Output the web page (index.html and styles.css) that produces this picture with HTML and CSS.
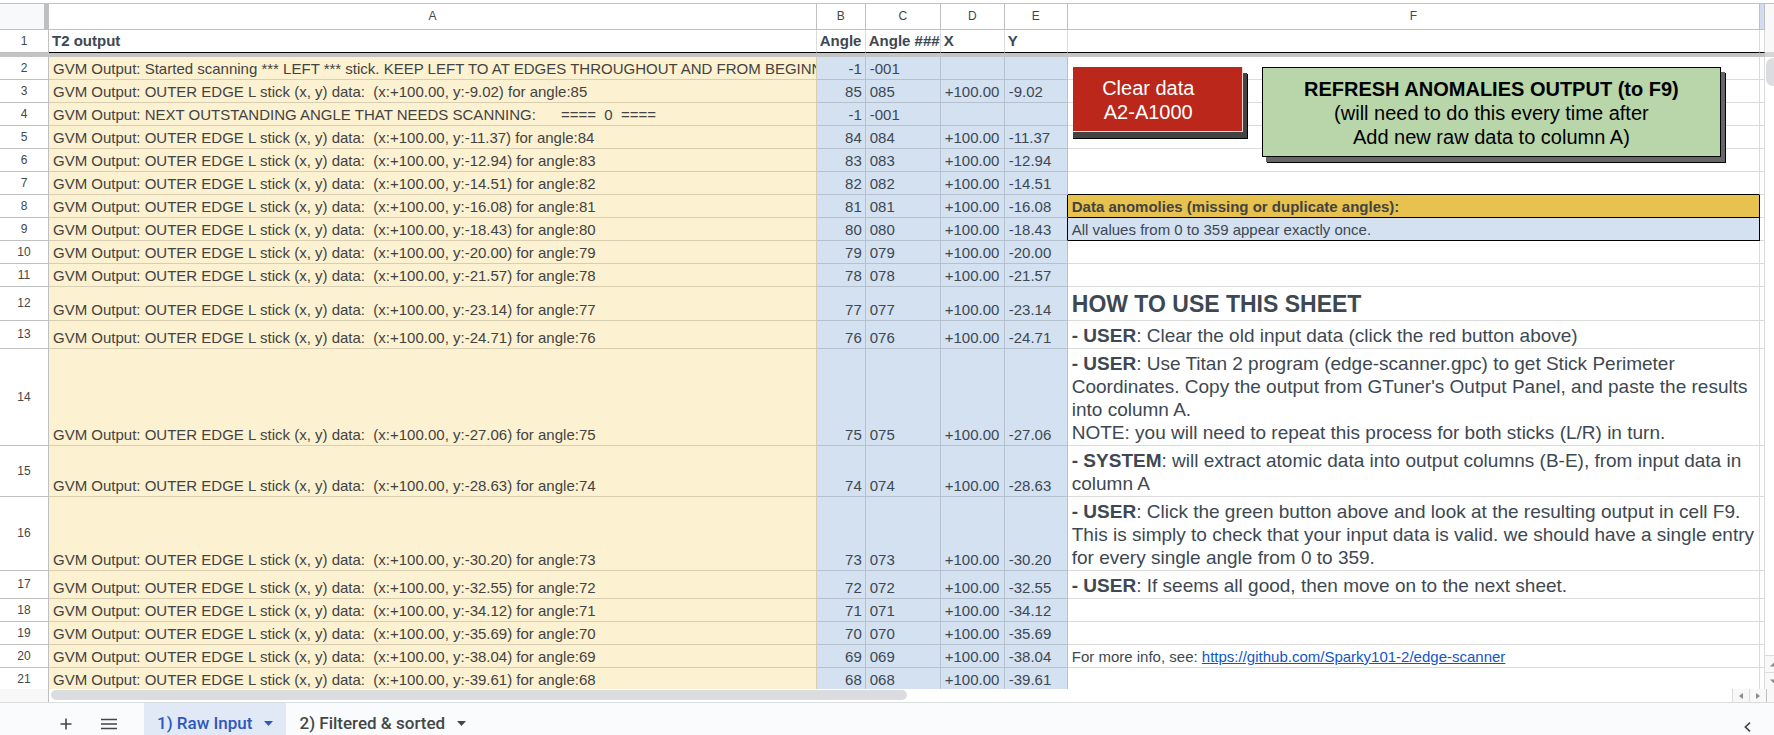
FILE: index.html
```html
<!DOCTYPE html>
<html lang="en">
<head>
<meta charset="utf-8">
<title>Edge scanner</title>
<link rel="stylesheet" href="styles.css">
</head>
<body>
<main class="sheet">
  <div class="viewport">
    <table class="grid">
      <colgroup>
        <col class="col-num"><col class="col-a"><col class="col-b"><col class="col-c"><col class="col-d"><col class="col-e"><col class="col-f"><col class="col-g">
      </colgroup>
      <thead>
        <tr class="letters"><td class="corner"></td><th>A</th><th>B</th><th>C</th><th>D</th><th>E</th><th>F</th><th class="selected"></th></tr>
        <tr class="titles"><th scope="row" class="num">1</th><th>T2 output</th><th>Angle</th><th>Angle ###</th><th>X</th><th>Y</th><th></th><th></th></tr>
        <tr class="freeze"><td colspan="8"></td></tr>
      </thead>
      <tbody>
        <tr><th scope="row">2</th><td class="raw">GVM Output: Started scanning *** LEFT *** stick. KEEP LEFT TO AT EDGES THROUGHOUT AND FROM BEGINNING</td><td class="out right">-1</td><td class="out">-001</td><td class="out"></td><td class="out"></td><td class="anchor"><div class="drawings"><button class="clear" type="button">Clear data<br>A2-A1000</button><button class="refresh" type="button"><b>REFRESH ANOMALIES OUTPUT (to F9)</b><br>(will need to do this every time after<br>Add new raw data to column A)</button></div></td><td></td></tr>
        <tr><th scope="row">3</th><td class="raw">GVM Output: OUTER EDGE L stick (x, y) data:  (x:+100.00, y:-9.02) for angle:85</td><td class="out right">85</td><td class="out">085</td><td class="out">+100.00</td><td class="out">-9.02</td><td></td><td></td></tr>
        <tr><th scope="row">4</th><td class="raw">GVM Output: NEXT OUTSTANDING ANGLE THAT NEEDS SCANNING:      ====  0  ====</td><td class="out right">-1</td><td class="out">-001</td><td class="out"></td><td class="out"></td><td></td><td></td></tr>
        <tr><th scope="row">5</th><td class="raw">GVM Output: OUTER EDGE L stick (x, y) data:  (x:+100.00, y:-11.37) for angle:84</td><td class="out right">84</td><td class="out">084</td><td class="out">+100.00</td><td class="out">-11.37</td><td></td><td></td></tr>
        <tr><th scope="row">6</th><td class="raw">GVM Output: OUTER EDGE L stick (x, y) data:  (x:+100.00, y:-12.94) for angle:83</td><td class="out right">83</td><td class="out">083</td><td class="out">+100.00</td><td class="out">-12.94</td><td></td><td></td></tr>
        <tr><th scope="row">7</th><td class="raw">GVM Output: OUTER EDGE L stick (x, y) data:  (x:+100.00, y:-14.51) for angle:82</td><td class="out right">82</td><td class="out">082</td><td class="out">+100.00</td><td class="out">-14.51</td><td class="over"></td><td></td></tr>
        <tr><th scope="row">8</th><td class="raw">GVM Output: OUTER EDGE L stick (x, y) data:  (x:+100.00, y:-16.08) for angle:81</td><td class="out right">81</td><td class="out">081</td><td class="out">+100.00</td><td class="out beside">-16.08</td><td class="boxed gold">Data anomolies (missing or duplicate angles):</td><td></td></tr>
        <tr><th scope="row">9</th><td class="raw">GVM Output: OUTER EDGE L stick (x, y) data:  (x:+100.00, y:-18.43) for angle:80</td><td class="out right">80</td><td class="out">080</td><td class="out">+100.00</td><td class="out beside">-18.43</td><td class="boxed out">All values from 0 to 359 appear exactly once.</td><td></td></tr>
        <tr><th scope="row">10</th><td class="raw">GVM Output: OUTER EDGE L stick (x, y) data:  (x:+100.00, y:-20.00) for angle:79</td><td class="out right">79</td><td class="out">079</td><td class="out">+100.00</td><td class="out">-20.00</td><td></td><td></td></tr>
        <tr><th scope="row">11</th><td class="raw">GVM Output: OUTER EDGE L stick (x, y) data:  (x:+100.00, y:-21.57) for angle:78</td><td class="out right">78</td><td class="out">078</td><td class="out">+100.00</td><td class="out">-21.57</td><td></td><td></td></tr>
        <tr><th scope="row">12</th><td class="raw">GVM Output: OUTER EDGE L stick (x, y) data:  (x:+100.00, y:-23.14) for angle:77</td><td class="out right">77</td><td class="out">077</td><td class="out">+100.00</td><td class="out">-23.14</td><td class="heading">HOW TO USE THIS SHEET</td><td></td></tr>
        <tr><th scope="row">13</th><td class="raw">GVM Output: OUTER EDGE L stick (x, y) data:  (x:+100.00, y:-24.71) for angle:76</td><td class="out right">76</td><td class="out">076</td><td class="out">+100.00</td><td class="out">-24.71</td><td class="note"><b>- USER</b>: Clear the old input data (click the red button above)</td><td></td></tr>
        <tr><th scope="row">14</th><td class="raw">GVM Output: OUTER EDGE L stick (x, y) data:  (x:+100.00, y:-27.06) for angle:75</td><td class="out right">75</td><td class="out">075</td><td class="out">+100.00</td><td class="out">-27.06</td><td class="note"><b>- USER</b>: Use Titan 2 program (edge-scanner.gpc) to get Stick Perimeter Coordinates. Copy the output from GTuner's Output Panel, and paste the results into column A.<br>NOTE: you will need to repeat this process for both sticks (L/R) in turn.</td><td></td></tr>
        <tr><th scope="row">15</th><td class="raw">GVM Output: OUTER EDGE L stick (x, y) data:  (x:+100.00, y:-28.63) for angle:74</td><td class="out right">74</td><td class="out">074</td><td class="out">+100.00</td><td class="out">-28.63</td><td class="note"><b>- SYSTEM</b>: will extract atomic data into output columns (B-E), from input data in column A</td><td></td></tr>
        <tr><th scope="row">16</th><td class="raw">GVM Output: OUTER EDGE L stick (x, y) data:  (x:+100.00, y:-30.20) for angle:73</td><td class="out right">73</td><td class="out">073</td><td class="out">+100.00</td><td class="out">-30.20</td><td class="note"><b>- USER</b>: Click the green button above and look at the resulting output in cell F9. This is simply to check that your input data is valid. we should have a single entry for every single angle from 0 to 359.</td><td></td></tr>
        <tr><th scope="row">17</th><td class="raw">GVM Output: OUTER EDGE L stick (x, y) data:  (x:+100.00, y:-32.55) for angle:72</td><td class="out right">72</td><td class="out">072</td><td class="out">+100.00</td><td class="out">-32.55</td><td class="note"><b>- USER</b>: If seems all good, then move on to the next sheet.</td><td></td></tr>
        <tr><th scope="row">18</th><td class="raw">GVM Output: OUTER EDGE L stick (x, y) data:  (x:+100.00, y:-34.12) for angle:71</td><td class="out right">71</td><td class="out">071</td><td class="out">+100.00</td><td class="out">-34.12</td><td></td><td></td></tr>
        <tr><th scope="row">19</th><td class="raw">GVM Output: OUTER EDGE L stick (x, y) data:  (x:+100.00, y:-35.69) for angle:70</td><td class="out right">70</td><td class="out">070</td><td class="out">+100.00</td><td class="out">-35.69</td><td></td><td></td></tr>
        <tr><th scope="row">20</th><td class="raw">GVM Output: OUTER EDGE L stick (x, y) data:  (x:+100.00, y:-38.04) for angle:69</td><td class="out right">69</td><td class="out">069</td><td class="out">+100.00</td><td class="out">-38.04</td><td>For more info, see: <a href="https://github.com/Sparky101-2/edge-scanner">https://github.com/Sparky101-2/edge-scanner</a></td><td></td></tr>
        <tr><th scope="row">21</th><td class="raw">GVM Output: OUTER EDGE L stick (x, y) data:  (x:+100.00, y:-39.61) for angle:68</td><td class="out right">68</td><td class="out">068</td><td class="out">+100.00</td><td class="out">-39.61</td><td></td><td></td></tr>
      </tbody>
    </table>
    <div class="vscroll">
      <div class="vhead"></div>
      <div class="vtrack"><div class="vthumb"></div></div>
      <button class="step" type="button" aria-label="Scroll up"><svg width="8" height="5" viewBox="0 0 8 5"><path d="M0 4.500L4 .5l4 4z"/></svg></button>
      <button class="step" type="button" aria-label="Scroll down"><svg width="8" height="5" viewBox="0 0 8 5"><path d="M0 .5h8l-4 4z"/></svg></button>
    </div>
  </div>
  <div class="hscroll">
    <div class="hhead"></div>
    <div class="htrack"><div class="hthumb"></div></div>
    <button class="hstep" type="button" aria-label="Scroll left"><svg width="4" height="6" viewBox="0 0 4 6"><path d="M4 0v6L0 3z"/></svg></button>
    <button class="hstep" type="button" aria-label="Scroll right"><svg width="4" height="6" viewBox="0 0 4 6"><path d="M0 0v6l4-3z"/></svg></button>
    <div class="hcorner"></div>
  </div>
</main>
<nav class="tabs" aria-label="Sheets">
  <button class="icon" type="button" aria-label="Add sheet"><svg width="12" height="12" viewBox="0 0 12 12"><path d="M6 .5v11M.5 6h11" fill="none" stroke="#444746" stroke-width="1.600"/></svg></button>
  <button class="icon" type="button" aria-label="All sheets"><svg width="16" height="12" viewBox="0 0 16 12"><path d="M0 1.500h16M0 6h16M0 10.500h16" fill="none" stroke="#444746" stroke-width="1.600"/></svg></button>
  <button class="tab active" type="button">1) Raw Input<svg width="9" height="5" viewBox="0 0 9 5"><path d="M0 0h9L4.500 5z"/></svg></button>
  <button class="tab" type="button">2) Filtered &amp; sorted<svg width="9" height="5" viewBox="0 0 9 5"><path d="M0 0h9L4.500 5z"/></svg></button>
  <button class="explore" type="button" aria-label="Show side panel"><svg width="7" height="10" viewBox="0 0 7 10"><path d="M6 .7L1.400 5 6 9.300" fill="none" stroke="#444746" stroke-width="1.700"/></svg></button>
</nav>
</body>
</html>
```

FILE: styles.css
```css
* { box-sizing: border-box; }

body {
  margin: 0;
  height: 100vh;
  display: flex;
  flex-direction: column;
  overflow: hidden;
  background: #fff;
  color: #3d4852;
  font: 15px/18px "Liberation Sans", Arial, sans-serif;
}

button {
  margin: 0;
  padding: 0;
  border: 0;
  background: none;
  font: inherit;
  color: inherit;
}

.sheet {
  flex: 1;
  min-height: 0;
  display: flex;
  flex-direction: column;
  padding-top: 3px;
}

.viewport {
  flex: 1;
  min-height: 0;
  display: flex;
  overflow: hidden;
  border-top: 1px solid #c0c0c0;
}

/* Grid */
.grid {
  flex: 1;
  min-width: 0;
  width: 100%;
  align-self: flex-start;
  table-layout: fixed;
  border-collapse: separate;
  border-spacing: 0;
}

.col-num { width: 49px; }
.col-a { width: 43.5%; }
.col-b { width: 49px; }
.col-c { width: 75px; }
.col-d { width: 64px; }
.col-e { width: 63px; }
.col-g { width: 5px; }

.grid td,
.grid th {
  height: 23px;
  padding: 2px 3px;
  border: solid rgba(0, 0, 0, 0.14);
  border-width: 0 1px 1px 0;
  overflow: hidden;
  text-align: left;
  vertical-align: bottom;
  white-space: pre;
}

.grid tbody td { padding: 3px 3px 1px 4px; }

.grid tbody th,
.grid .titles .num {
  padding: 0 0 1px;
  border-color: #c0c0c0;
  text-align: center;
  vertical-align: middle;
  color: #444746;
  font-size: 12px;
  font-weight: normal;
}

.grid .letters th,
.grid .letters td {
  height: 26px;
  padding: 0 0 2px;
  border-color: #c0c0c0;
  text-align: center;
  vertical-align: middle;
  color: #444746;
  font-size: 12px;
  font-weight: normal;
}

.grid .letters .corner {
  background: #f8f9fa;
  border-right: 5px solid #c0c0c0;
}

.grid .letters .selected { background: #d3ddf2; }

.grid .titles th { border-bottom-color: #000; }
.grid .titles .num { border-bottom-color: #c0c0c0; }

.grid .freeze td {
  height: 4px;
  padding: 0;
  border: 0;
  background: #c4c4c4;
}

.grid .raw { background: #fcf1d0; color: #434343; }
.grid .out { background: #d3e1f1; }
.grid .right { text-align: right; }
.grid .over { border-bottom-color: #000; }
.grid .beside { border-right-color: #000; }
.grid .boxed { border-color: #000; }
.grid .gold { background: #e8c24f; color: #434343; font-weight: bold; }

.grid tbody .heading {
  font-size: 23px;
  line-height: 29px;
  font-weight: bold;
}

.grid tbody .note {
  font-size: 19px;
  line-height: 23px;
  white-space: normal;
}

.grid a { color: #1155cc; }

/* Drawings that float over the cells */
.grid tbody .anchor {
  position: relative;
  overflow: visible;
}

.drawings {
  position: absolute;
  top: 10px;
  left: 5px;
  right: 38px;
  z-index: 1;
  display: flex;
  align-items: flex-start;
  gap: 19px;
  color: #000;
  font-size: 20px;
  line-height: 24px;
  text-align: center;
}

.clear {
  flex: none;
  width: 170px;
  padding: 9px 18px 7px 0;
  border: solid #f4d6d2;
  border-width: 0 1px 1px 0;
  background: #bb271a;
  box-shadow: 0 6px 0 #434343, 4px 6px 0 #434343, 0 7px 0 #000, 5px 7px 0 #000;
  color: #fff;
}

.refresh {
  flex: 1;
  padding: 9px 0 7px;
  border: 1px solid #000;
  background: #b9d5aa;
  box-shadow: 4px 5px 0 #666, 5px 6px 0 #000;
}

/* Scrollbars */
.vscroll {
  flex: none;
  display: flex;
  flex-direction: column;
  width: 17px;
  margin-right: -8px;
}

.vhead {
  height: 53px;
  border-bottom: 5px solid #d5d5d5;
  background: #f8f8f8;
}

.vtrack { flex: 1; padding: 1px; }

.vthumb {
  height: 28px;
  border-radius: 7px;
  background: #dadce0;
}

.step,
.hstep {
  display: flex;
  align-items: center;
  justify-content: center;
  background: #f8f8f8;
  fill: #8a8a8a;
}

.step { height: 17px; border-top: 1px solid #dcdcdc; }

.hscroll {
  flex: none;
  display: flex;
  height: 13px;
}

.hhead {
  width: 49px;
  background: #f8f8f8;
  border-right: 1px solid #c0c0c0;
}

.htrack { flex: 1; padding: 1px 2px 2px; }

.hthumb {
  width: 51%;
  height: 10px;
  border-radius: 5px;
  background: #dadce0;
}

.hstep { width: 17px; border-left: 1px solid #dcdcdc; }

.hcorner {
  width: 8px;
  border-left: 1px solid #c0c0c0;
  background: #f8f8f8;
}

/* Sheet tabs */
.tabs {
  flex: none;
  display: flex;
  height: 33px;
  border-top: 1px solid #dadce0;
  background: #f9fbfd;
  color: #444746;
  font: 500 17px/24px Roboto, sans-serif;
}

.tabs .icon {
  width: 43px;
  padding-top: 9px;
}

.tabs .icon:first-child { margin-left: 44px; }

.tab {
  display: flex;
  align-items: center;
  gap: 12px;
  padding: 8px 13px 0;
  fill: currentColor;
}

.tab.active {
  margin-left: 14px;
  background: #e1e9f7;
  color: #2f57bd;
}

.explore {
  margin-left: auto;
  padding: 11px 23px 0 0;
}
```
